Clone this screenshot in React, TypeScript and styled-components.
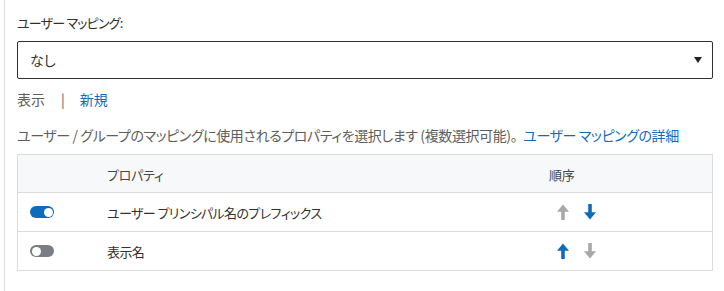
import React from "react";
import styled, { createGlobalStyle } from "styled-components";

const GlobalStyle = createGlobalStyle`
  html, body { margin: 0; padding: 0; background: #ffffff; }
  body {
    font-family: "Noto Sans CJK JP", "Noto Sans", sans-serif;
    font-size: 14px;
    font-feature-settings: "palt";
    color: #323130;
  }
  #root { padding-left: 4px; }
`;

const Panel = styled.div`
  border-left: 1px solid #e1e1e1;
  padding: 13px 11px 21px 12px;
`;

const FieldLabel = styled.div`
  line-height: 20px;
  font-size: 13px;
  letter-spacing: -0.8px;
  color: #323130;
`;

const Select = styled.div`
  margin-top: 8px;
  height: 38px;
  box-sizing: border-box;
  border: 1px solid #323130;
  border-radius: 2px;
  display: flex;
  align-items: center;
  justify-content: space-between;
  padding: 0 10px 0 12px;
  color: #323130;
`;

const Caret = styled.span`
  width: 0;
  height: 0;
  border-left: 4.5px solid transparent;
  border-right: 4.5px solid transparent;
  border-top: 6px solid #222;
`;

const LinkRow = styled.div`
  margin-top: 10px;
  line-height: 20px;
  display: flex;
  align-items: center;
  color: #605e5c;
`;

const Sep = styled.span`
  margin: 0 15px 0 16px;
  color: #605e5c;
`;

const Link = styled.a<{ $gap?: boolean }>`
  color: #0f6cbd;
  text-decoration: none;
  cursor: pointer;
  margin-left: ${(p) => (p.$gap ? "6px" : "0")};
`;

const Description = styled.div`
  margin-top: 16px;
  line-height: 20px;
  letter-spacing: -0.4px;
  color: #605e5c;
  white-space: nowrap;
`;

const Table = styled.div`
  margin-top: 9px;
  border: 1px solid #dcdcdc;
`;

const Row = styled.div<{ $header?: boolean }>`
  display: grid;
  grid-template-columns: 89px 1fr 163px;
  align-items: center;
  height: ${(p) => (p.$header ? 37 : 38)}px;
  background: ${(p) => (p.$header ? "#f7f8fa" : "#ffffff")};
  border-bottom: 1px solid #dcdcdc;
  &:last-child { border-bottom: none; }
  color: #323130;
`;

const ToggleCell = styled.div`
  padding-left: 12px;
  display: flex;
  align-items: center;
`;

const Toggle = styled.span<{ $on: boolean }>`
  position: relative;
  display: inline-block;
  width: 24px;
  height: 12px;
  border-radius: 6px;
  background: ${(p) => (p.$on ? "#0f6cbd" : "#797e84")};
  &::after {
    content: "";
    position: absolute;
    top: 1.5px;
    ${(p) => (p.$on ? "right: 1.5px;" : "left: 1.5px;")}
    width: 9px;
    height: 9px;
    border-radius: 50%;
    background: #ffffff;
  }
`;

const Cell = styled.div<{ $header?: boolean }>`
  line-height: 20px;
  font-size: 13px;
  letter-spacing: ${(p) => (p.$header ? "-0.3px" : "-0.6px")};
  color: ${(p) => (p.$header ? "#484644" : "#323130")};
  padding-top: ${(p) => (p.$header ? "2px" : "1px")};
  white-space: nowrap;
`;

const OrderCell = styled.div`
  display: flex;
  align-items: center;
`;

const ArrowButton = styled.button<{ $enabled: boolean }>`
  width: 27px;
  height: 24px;
  padding: 0;
  border: none;
  background: transparent;
  display: flex;
  align-items: center;
  justify-content: center;
  color: ${(p) => (p.$enabled ? "#0f6cbd" : "#a8a8a8")};
  cursor: ${(p) => (p.$enabled ? "pointer" : "default")};
`;

const Arrow = ({ dir }: { dir: "up" | "down" }) => (
  <svg width="12" height="16" viewBox="0 0 12 16" aria-hidden="true">
    <path
      fill="currentColor"
      d="M4.2 0 H7.8 V8.2 H12 L6 15.5 L0 8.2 H4.2 Z"
      transform={dir === "up" ? "rotate(180 6 8)" : undefined}
    />
  </svg>
);

const rows = [
  { on: true, name: "ユーザー プリンシパル名のプレフィックス", up: false, down: true },
  { on: false, name: "表示名", up: true, down: false },
];

export default function App() {
  return (
    <>
      <GlobalStyle />
      <Panel>
        <FieldLabel>ユーザー マッピング:</FieldLabel>
        <Select>
          <span>なし</span>
          <Caret />
        </Select>
        <LinkRow>
          <span>表示</span>
          <Sep>|</Sep>
          <Link>新規</Link>
        </LinkRow>
        <Description>
          ユーザー / グループのマッピングに使用されるプロパティを選択します (複数選択可能)。
          <Link $gap>ユーザー マッピングの詳細</Link>
        </Description>
        <Table>
          <Row $header>
            <div />
            <Cell $header>プロパティ</Cell>
            <Cell $header>順序</Cell>
          </Row>
          {rows.map((r) => (
            <Row key={r.name}>
              <ToggleCell>
                <Toggle $on={r.on} />
              </ToggleCell>
              <Cell>{r.name}</Cell>
              <OrderCell>
                <ArrowButton $enabled={r.up}>
                  <Arrow dir="up" />
                </ArrowButton>
                <ArrowButton $enabled={r.down}>
                  <Arrow dir="down" />
                </ArrowButton>
              </OrderCell>
            </Row>
          ))}
        </Table>
      </Panel>
    </>
  );
}
